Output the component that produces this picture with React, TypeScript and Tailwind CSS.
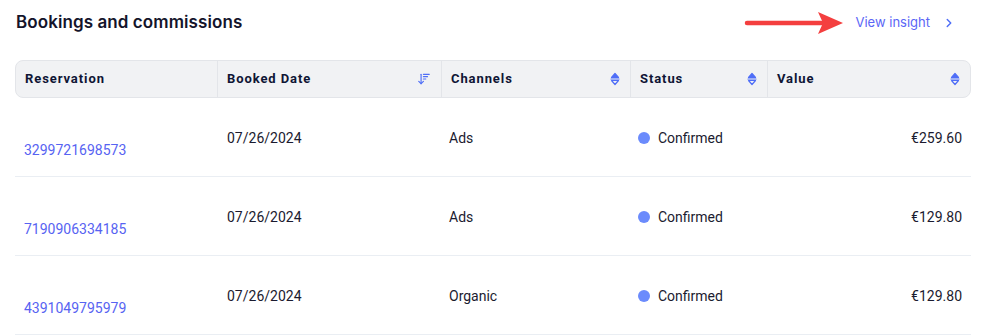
import { ArrowDownWideNarrow, ChevronRight } from "lucide-react";

const rows = [
  { id: "3299721698573", date: "07/26/2024", channel: "Ads", status: "Confirmed", value: "€259.60" },
  { id: "7190906334185", date: "07/26/2024", channel: "Ads", status: "Confirmed", value: "€129.80" },
  { id: "4391049795979", date: "07/26/2024", channel: "Organic", status: "Confirmed", value: "€129.80" },
];

const cols = "grid grid-cols-[202px_224px_189px_137px_1fr]";

const SortIcon = () => (
  <svg width="10" height="14" viewBox="0 0 10 14" fill="none">
    <path d="M5 1.5L8.5 5.5H1.5Z" fill="#4f6ef7" stroke="#4f6ef7" strokeWidth="1.2" strokeLinejoin="round" />
    <path d="M1 7H9" stroke="#4f6ef7" strokeWidth="1.2" strokeLinecap="round" />
    <path d="M5 12.5L8.5 8.5H1.5Z" stroke="#4f6ef7" strokeWidth="1.2" strokeLinejoin="round" />
  </svg>
);

const RedArrow = () => (
  <svg width="100" height="26" viewBox="0 0 100 26" fill="none">
    <path d="M3 13H78" stroke="#f43f3f" strokeWidth="4.5" strokeLinecap="round" />
    <path d="M74 2L99 13L74 24L79 13Z" fill="#f43f3f" />
  </svg>
);

function HeaderCell({ label, icon, last }: { label: string; icon?: React.ReactNode; last?: boolean }) {
  return (
    <div className={`flex items-center justify-between pl-[9px] pr-[10px] h-[36px] ${last ? "" : "border-r border-[#e3e5e9]"}`}>
      <span className="text-[13px] font-bold tracking-[0.07em] text-[#0f1535]">{label}</span>
      {icon}
    </div>
  );
}

export default function App() {
  return (
    <div className="w-[984px] h-[336px] bg-white overflow-hidden font-['Roboto',sans-serif]">
      <div className="flex items-center justify-between pl-[16px] pr-[28px] h-[46px]">
        <h1 className="font-['Inter',sans-serif] text-[17px] font-semibold text-[#14142b] tracking-[0.005em]">
          Bookings and commissions
        </h1>
        <div className="flex items-center">
          <RedArrow />
          <span className="ml-[11px] text-[13px] font-['Inter',sans-serif] text-[#5b66f6]">View insight</span>
          <ChevronRight className="ml-[12px] w-[14px] h-[14px] text-[#4f6ef7]" strokeWidth={2.5} />
        </div>
      </div>

      <div className="pl-[15px] pr-[13px] pt-[14px]">
        <div className={`${cols} bg-[#f1f2f4] border border-[#e3e5e9] rounded-[8px]`}>
          <HeaderCell label="Reservation" />
          <HeaderCell
            label="Booked Date"
            icon={<ArrowDownWideNarrow className="w-[14px] h-[14px] text-[#4f6ef7]" strokeWidth={2} />}
          />
          <HeaderCell label="Channels" icon={<SortIcon />} />
          <HeaderCell label="Status" icon={<SortIcon />} />
          <HeaderCell label="Value" icon={<SortIcon />} last />
        </div>

        {rows.map((r) => (
          <div key={r.id} className={`${cols} h-[79px] border-b border-[#eaeef3] text-[14px] text-[#1b1b2f]`}>
            <div className="pl-[9px] pt-[42px] text-[#5763f2]">{r.id}</div>
            <div className="pl-[10px] pt-[30px]">{r.date}</div>
            <div className="pl-[8px] pt-[30px]">{r.channel}</div>
            <div className="pl-[8px] pt-[30px] flex items-start">
              <span className="mt-[4px] w-[12px] h-[12px] rounded-full bg-[#6b8bfc]" />
              <span className="ml-[8px]">{r.status}</span>
            </div>
            <div className="pr-[9px] pt-[30px] text-right">{r.value}</div>
          </div>
        ))}
      </div>
    </div>
  );
}
